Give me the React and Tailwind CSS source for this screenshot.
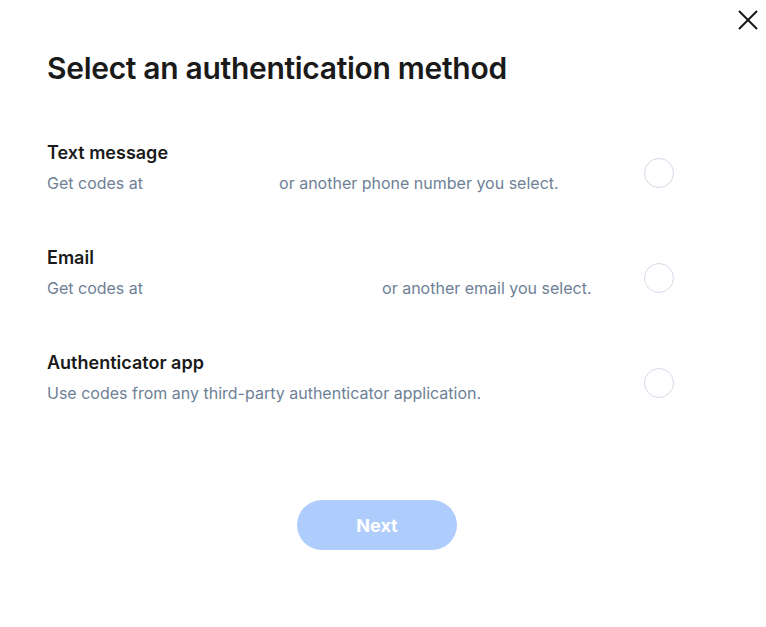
import React from "react";

const methods = [
  { title: "Text message", pre: "Get codes at", gap: "w-[136px]", post: "or another phone number you select." },
  { title: "Email", pre: "Get codes at", gap: "w-[239px]", post: "or another email you select." },
  { title: "Authenticator app", pre: "Use codes from any third-party authenticator application.", gap: null, post: "" },
];

export default function App() {
  return (
    <div className="relative w-[766px] h-[627px] bg-white font-['Inter',sans-serif] text-[#1a1a1a]">
      <button className="absolute right-[7px] top-[9px] w-[22px] h-[22px] flex items-center justify-center" aria-label="Close">
        <svg width="22" height="22" viewBox="0 0 22 22" fill="none" stroke="#1a1a1a" strokeWidth="2">
          <path d="M2 2 L20 20 M20 2 L2 20" />
        </svg>
      </button>
      <div className="pl-[47px] pr-[92px] pt-[49px]">
        <h1 className="text-[30px] leading-[38px] font-semibold tracking-[-0.3px]">Select an authentication method</h1>
        <div className="mt-[54px] flex flex-col gap-[51px]">
          {methods.map((m) => (
            <div key={m.title} className="flex items-center justify-between">
              <div>
                <div className="text-[18px] leading-[24px] font-semibold">{m.title}</div>
                <div className="mt-[6px] text-[16px] leading-[24px] text-[#6e7f96] flex">
                  <span>{m.pre}</span>
                  {m.gap && <span className={`${m.gap} inline-block`} />}
                  {m.post && <span>{m.post}</span>}
                </div>
              </div>
              <div className="w-[30px] h-[30px] rounded-full border border-[#d3dbe8] mt-[10px]" />
            </div>
          ))}
        </div>
      </div>
      <div className="flex justify-center mt-[95px] pr-[12px]">
        <button className="w-[160px] h-[50px] rounded-full bg-[#aecdfd] text-white text-[18px] font-bold">Next</button>
      </div>
    </div>
  );
}
